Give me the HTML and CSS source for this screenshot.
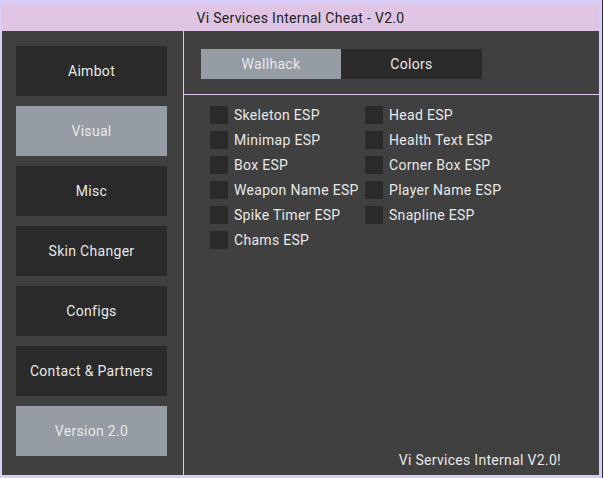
FILE: index.html
```html
<!DOCTYPE html>
<html>
<head>
<meta charset="utf-8">
<link rel="stylesheet" href="styles.css">
</head>
<body>
<div class="frame">
  <div class="window">
    <div class="titlebar">Vi Services Internal Cheat - V2.0</div>
    <div class="main">
      <nav class="sidebar">
        <div class="navbtn">Aimbot</div>
        <div class="navbtn active">Visual</div>
        <div class="navbtn">Misc</div>
        <div class="navbtn">Skin Changer</div>
        <div class="navbtn">Configs</div>
        <div class="navbtn">Contact &amp; Partners</div>
        <div class="navbtn active">Version 2.0</div>
      </nav>
      <section class="panel">
        <div class="tabbar">
          <div class="tab active">Wallhack</div>
          <div class="tab">Colors</div>
        </div>
        <div class="content">
          <div class="grid">
            <label class="check"><span class="box"></span>Skeleton ESP</label>
            <label class="check"><span class="box"></span>Head ESP</label>
            <label class="check"><span class="box"></span>Minimap ESP</label>
            <label class="check"><span class="box"></span>Health Text ESP</label>
            <label class="check"><span class="box"></span>Box ESP</label>
            <label class="check"><span class="box"></span>Corner Box ESP</label>
            <label class="check"><span class="box"></span>Weapon Name ESP</label>
            <label class="check"><span class="box"></span>Player Name ESP</label>
            <label class="check"><span class="box"></span>Spike Timer ESP</label>
            <label class="check"><span class="box"></span>Snapline ESP</label>
            <label class="check"><span class="box"></span>Chams ESP</label>
          </div>
          <div class="footer">Vi Services Internal V2.0!</div>
        </div>
      </section>
    </div>
  </div>
</div>
</body>
</html>
```
FILE: styles.css
```css
* { box-sizing: border-box; }
html, body {
  margin: 0;
  padding: 0;
  width: 603px;
  height: 478px;
  overflow: hidden;
  background: #d8cdf8;
  font-family: Roboto, "Liberation Sans", sans-serif;
  font-size: 14px;
  letter-spacing: 0.3px;
}
.frame {
  width: 603px;
  height: 478px;
  border-right: 1px solid #2a2640;
}
.window {
  height: 478px;
  padding: 3px 3px 3px 2px;
  display: flex;
  flex-direction: column;
}
.titlebar {
  height: 28px;
  background: #dfc5e3;
  color: #222;
  display: flex;
  align-items: center;
  justify-content: center;
  padding-top: 1px;
}
.main {
  flex: 1;
  display: flex;
  background: #404040;
}
.sidebar {
  width: 182px;
  border-right: 1px solid #dcc8ec;
  padding: 15px 15px 0 14px;
  display: flex;
  flex-direction: column;
  gap: 10px;
}
.navbtn {
  height: 50px;
  width: 151px;
  background: #2a2a2a;
  color: #e8e8e8;
  display: flex;
  align-items: center;
  justify-content: center;
}
.navbtn.active {
  background: #959ca3;
}
.panel {
  flex: 1;
  display: flex;
  flex-direction: column;
}
.tabbar {
  height: 64px;
  border-bottom: 1px solid #dcc8ec;
  padding: 18px 0 0 17px;
  display: flex;
}
.tab {
  width: 141px;
  height: 30px;
  background: #2a2a2a;
  color: #e8e8e8;
  display: flex;
  align-items: center;
  justify-content: center;
}
.tab.active {
  width: 140px;
  background: #959ca3;
}
.content {
  flex: 1;
  display: flex;
  flex-direction: column;
  padding: 11px 0 0 26px;
}
.grid {
  display: grid;
  grid-template-columns: 155px 200px;
  grid-auto-rows: 25px;
}
.check {
  display: flex;
  align-items: flex-start;
  gap: 6px;
  color: #e8e8e8;
  white-space: nowrap;
  line-height: 19px;
}
.box {
  width: 18px;
  height: 18px;
  background: #2a2a2a;
  flex: none;
}
.footer {
  margin-top: auto;
  align-self: flex-end;
  margin-right: 38px;
  margin-bottom: 7px;
  color: #e8e8e8;
}
```
